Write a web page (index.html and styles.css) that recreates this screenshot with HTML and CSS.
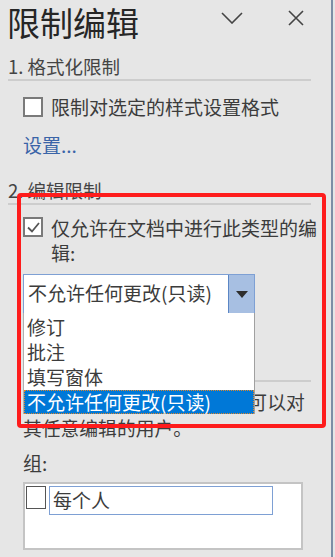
FILE: index.html
```html
<!DOCTYPE html>
<html lang="zh-CN">
<head>
  <meta charset="UTF-8" />
  <title>限制编辑</title>
  <link rel="stylesheet" href="styles.css">
</head>
<body>
  <div class="pane">
    <div class="header">
      <h1>限制编辑</h1>
      <div class="header-icons">
        <svg class="icon-chevron" width="22" height="12" viewBox="0 0 22 12">
          <path d="M1 1 L11 11 L21 1" fill="none" stroke="#444" stroke-width="1.6" />
        </svg>
        <svg class="icon-close" width="16" height="16" viewBox="0 0 16 16">
          <path d="M1 1 L15 15 M15 1 L1 15" fill="none" stroke="#444" stroke-width="1.6" />
        </svg>
      </div>
    </div>

    <div class="section-title">1. 格式化限制</div>
    <label class="check-row">
      <span class="checkbox"></span>
      <span class="check-label">限制对选定的样式设置格式</span>
    </label>
    <div class="link">设置...</div>

    <div class="section-title second">2. 编辑限制</div>
    <label class="check-row multi">
      <span class="checkbox checked">
        <svg width="15" height="15" viewBox="0 0 15 15">
          <path d="M2 7.5 L6 11.5 L13 3" fill="none" stroke="#555" stroke-width="1.8" />
        </svg>
      </span>
      <span class="check-label">仅允许在文档中进行此类型的编辑:</span>
    </label>

    <div class="select-wrap">
      <div class="select">
        <span class="select-text">不允许任何更改(只读)</span>
        <span class="select-btn"><span class="triangle"></span></span>
      </div>
      <ul class="dropdown">
        <li>修订</li>
        <li>批注</li>
        <li>填写窗体</li>
        <li class="active">不允许任何更改(只读)</li>
      </ul>
    </div>

    <div class="divider"></div>
    <p class="desc">选择部分文档内容，并选择可以对其任意编辑的用户。</p>
    <div class="group-label">组:</div>
    <div class="group-box">
      <div class="group-item">
        <span class="checkbox small"></span>
        <span class="group-input">每个人</span>
      </div>
    </div>

    <div class="highlight-box"></div>
  </div>
  <div class="edge"></div>
</body>
</html>
```

FILE: styles.css
```css
* {
  margin: 0;
  padding: 0;
  box-sizing: border-box;
}

body {
  display: flex;
  width: 335px;
  height: 557px;
  overflow: hidden;
  background-color: #e6e6e6;
  font-family: "Noto Sans CJK SC", "Noto Sans", sans-serif;
  color: #3c3c3c;
}

.pane {
  position: relative;
  width: 331px;
  height: 557px;
  padding-left: 8px;
  padding-right: 12px;
}

.edge {
  width: 2px;
  height: 557px;
  background-color: #7d8ea6;
}

.header {
  display: flex;
  align-items: flex-start;
  justify-content: space-between;
  margin-left: -1px;
}

h1 {
  margin: -2px 0 -2px;
  font-size: 33px;
  font-weight: normal;
  line-height: 48px;
  white-space: nowrap;
  color: #262626;
}

.header-icons {
  display: flex;
  align-items: center;
  gap: 45px;
  margin-top: 10px;
  margin-right: 15px;
}

.section-title {
  width: 303px;
  font-size: 18.5px;
  line-height: 24px;
  margin-top: 10px;
  padding-bottom: 1px;
  border-bottom: 2px solid #cdcdcd;
  color: #444;
}

.section-title.second {
  margin-top: 20px;
}

.check-row {
  display: flex;
  align-items: center;
  gap: 8px;
  margin: 13px 0 0 15px;
  font-size: 19px;
  line-height: 26px;
}

.check-row.multi {
  align-items: flex-start;
  margin-top: 10px;
}

.check-row.multi .check-label {
  line-height: 25px;
}

.check-row.multi .checkbox {
  margin-top: 2px;
}

.checkbox {
  flex-shrink: 0;
  display: flex;
  align-items: center;
  justify-content: center;
  width: 20px;
  height: 20px;
  border: 2px solid #7a7a7a;
  background-color: #fff;
}

.checkbox.small {
  width: 20px;
  height: 23px;
  border-width: 1px;
  border-color: #555;
}

.link {
  margin: 12px 0 0 15px;
  font-size: 19px;
  line-height: 26px;
  color: #3a64a8;
}

.select-wrap {
  position: relative;
  margin: 9px 0 0 15px;
  width: 232px;
}

.select {
  display: flex;
  height: 40px;
  border: 1px solid #7ea0d4;
  background-color: #fff;
}

.select-text {
  flex: 1;
  padding-left: 4px;
  font-size: 19px;
  line-height: 36px;
}

.select-btn {
  display: flex;
  align-items: center;
  justify-content: center;
  width: 26px;
  background-color: #a7bfe2;
  border-left: 1px solid #5b86c5;
}

.triangle {
  width: 0;
  height: 0;
  border-left: 6px solid transparent;
  border-right: 6px solid transparent;
  border-top: 7px solid #2e2e2e;
}

.dropdown {
  position: absolute;
  top: 39px;
  left: 0;
  width: 232px;
  list-style: none;
  padding-top: 2px;
  background-color: #fff;
  border-left: 1px solid #b0b0b0;
  border-right: 1px solid #a0a0a0;
  z-index: 2;
}

.dropdown li {
  height: 25px;
  padding-left: 3px;
  font-size: 19px;
  line-height: 23px;
}

.dropdown li.active {
  height: 24px;
  line-height: 21px;
  padding-left: 2px;
  background-color: #0078d7;
  color: #fff;
  border: 1px dotted #e0872a;
}

.divider {
  margin: 66px 0 0 15px;
  width: 288px;
  border-top: 2px solid #cdcdcd;
}

.desc {
  margin: 7px 0 0 15px;
  width: 286px;
  font-size: 18.8px;
  line-height: 26px;
}

.group-label {
  margin: 9px 0 0 15px;
  font-size: 19px;
  line-height: 26px;
}

.group-box {
  margin: 6px 0 0 15px;
  width: 280px;
  height: 68px;
  border: 2px solid #c4c4c4;
  background-color: #fff;
  padding: 2px 0 0 1px;
}

.group-item {
  display: flex;
  align-items: flex-start;
  gap: 3px;
}

.group-input {
  width: 224px;
  height: 29px;
  padding-left: 3px;
  border: 1px solid #7ea0d4;
  font-size: 19px;
  line-height: 25px;
}

.highlight-box {
  position: absolute;
  left: 17px;
  top: 193px;
  width: 309px;
  height: 235px;
  border: 4px solid #fe1c1c;
  border-radius: 4px;
  z-index: 3;
}
```
